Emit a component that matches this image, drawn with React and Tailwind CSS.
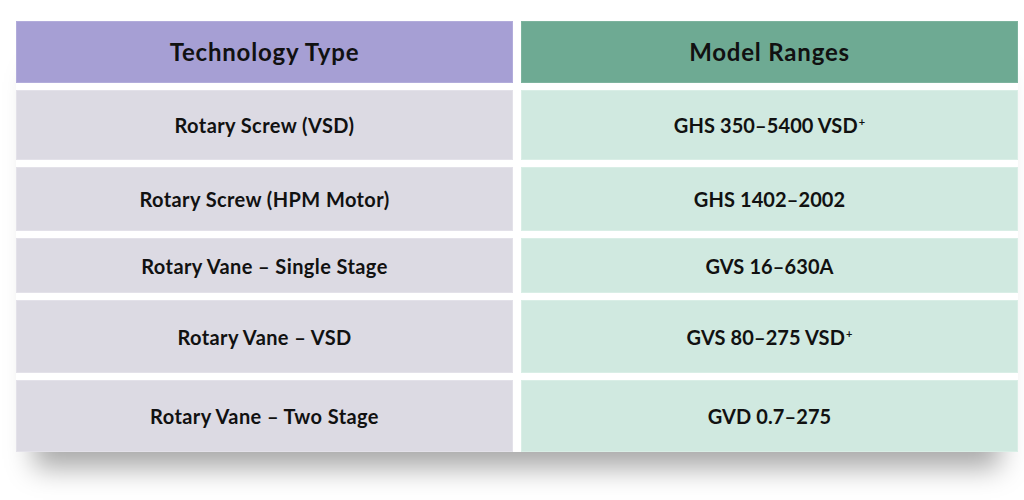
import React from "react";

const rows = [
  { h: "h-[70px]", left: "Rotary Screw (VSD)", right: "GHS 350–5400 VSD", plus: true },
  { h: "h-[64px]", left: "Rotary Screw (HPM Motor)", right: "GHS 1402–2002" },
  { h: "h-[55px]", left: "Rotary Vane – Single Stage", right: "GVS 16–630A" },
  { h: "h-[73px]", left: "Rotary Vane – VSD", right: "GVS 80–275 VSD", plus: true },
  { h: "h-[72px]", left: "Rotary Vane – Two Stage", right: "GVD 0.7–275" },
];

export default function App() {
  return (
    <div
      className="w-[1024px] h-[500px] bg-white overflow-hidden pt-[21px] pl-4"
      style={{ fontFamily: "Lato, 'Open Sans', sans-serif" }}
    >
      <div className="w-[1002px] grid grid-cols-2 gap-x-2 gap-y-[7px] shadow-[0_34px_26px_-18px_rgba(0,0,0,0.34)]">
        <div className="h-[62px] flex items-center justify-center bg-[#a69fd4] border border-[#b2acdb] text-[24px] font-bold text-[#111] tracking-[0.8px]">
          Technology Type
        </div>
        <div className="h-[62px] flex items-center justify-center bg-[#6eaa93] border border-[#7db39e] text-[24px] font-bold text-[#111] tracking-[0.8px]">
          Model Ranges
        </div>
        {rows.map((r, i) => (
          <React.Fragment key={i}>
            <div
              className={`${r.h} flex items-center justify-center bg-[#dcdae3] border border-[#e3e1e9] text-[20px] font-bold text-[#111] tracking-[0.4px]`}
            >
              {r.left}
            </div>
            <div
              className={`${r.h} flex items-center justify-center bg-[#d0e9e0] border border-[#d9eee6] text-[20px] font-bold text-[#111] tracking-[0.1px]`}
            >
              <span>
                {r.right}
                {r.plus && <span className="relative -top-[7px] text-[11px] ml-[1px]">+</span>}
              </span>
            </div>
          </React.Fragment>
        ))}
      </div>
    </div>
  );
}
